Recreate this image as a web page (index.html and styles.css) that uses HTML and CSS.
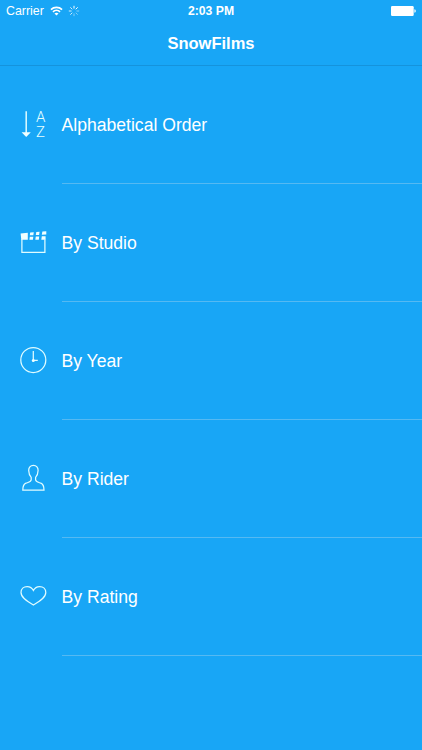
FILE: index.html
```html
<!DOCTYPE html>
<html lang="en">
<head>
<meta charset="utf-8">
<title>SnowFilms</title>
<link rel="stylesheet" href="styles.css">
</head>
<body>
<header class="header">
  <div class="status">
    <div class="status-left">
      <span class="carrier">Carrier</span>
      <svg class="wifi" width="13" height="10" viewBox="0 0 14 10"><g fill="none" stroke="#fff" stroke-width="1.8"><path d="M1 3.5A8.7 8.7 0 0 1 13 3.5"/><path d="M3.2 5.9A5.4 5.4 0 0 1 10.8 5.9"/></g><path d="M4.8 7.6Q7 6 9.2 7.6L7 9.8Z" fill="#fff"/></svg>
      <svg class="spinner" width="12" height="12" viewBox="-6 -6 12 12" stroke="#fff" stroke-width="1" stroke-linecap="round"><path d="M0-2.8V-4.8M2-2L3.4-3.4"/><path opacity=".45" d="M2.8 0H4.8M2 2L3.4 3.4M0 2.8V4.8"/><path opacity=".8" d="M-2 2L-3.4 3.4M-2.8 0H-4.8M-2-2L-3.4-3.4"/></svg>
    </div>
    <span class="time">2:03 PM</span>
    <svg class="battery" width="25" height="10" viewBox="0 0 25 10" fill="#fff"><rect width="22.7" height="10" rx="1.2"/><path d="M23.4 3.2Q24.8 3.4 24.8 5T23.4 6.8Z"/></svg>
  </div>
  <h1 class="title">SnowFilms</h1>
</header>
<main class="list">
  <div class="row">
    <svg class="icon" viewBox="0 0 30 39"><path class="line arrow" d="M8.2 6.2V28"/><path class="solid" d="M3.6 27.2H12.8L8.2 32Z"/><text class="letter" x="22.7" y="17.4">A</text><text class="letter" x="22.6" y="31.6">Z</text></svg>
    <span class="label">Alphabetical Order</span>
  </div>
  <div class="row">
    <svg class="icon" viewBox="0 0 30 39"><path class="line" d="M3.9 16V29.3H26.9V16.6"/><path class="solid" d="M2.6 10.5L9.8 9.7V16.8H3.3ZM12.2 9.5L15.8 9.2 15.3 12.2H11.8ZM18.3 9L21.6 8.8 21.1 11.9H17.8ZM24.4 8.5L28.3 8.2V11.4L23.8 11.7ZM11.8 13.8H15.3L14.9 16.8H11.4ZM17.8 13.5H21.2L20.8 16.8H17.3ZM23.8 13.2H27.6V16.8H23.3Z"/></svg>
    <span class="label">By Studio</span>
  </div>
  <div class="row">
    <svg class="icon" viewBox="0 0 30 39"><circle class="line" cx="15.3" cy="19" r="12.5"/><path class="line" d="M15.3 10V19.4H19.8"/><circle class="solid" cx="15.3" cy="19.4" r="1.5"/></svg>
    <span class="label">By Year</span>
  </div>
  <div class="row">
    <svg class="icon" viewBox="0 0 30 39"><path class="line" d="M15.4 6.4C12.3 6.4 10.6 8.6 10.7 11.6C10.8 14.6 11.6 16.8 13.2 18.4V20.8C13.2 22.8 10.4 23.3 8 24.2C5.4 25.2 4.8 27.5 4.8 31.2H26C26 27.5 25.4 25.2 22.8 24.2C20.4 23.3 17.6 22.8 17.6 20.8V18.4C19.2 16.8 20 14.6 20.1 11.6C20.2 8.6 18.5 6.4 15.4 6.4Z"/></svg>
    <span class="label">By Rider</span>
  </div>
  <div class="row">
    <svg class="icon" viewBox="0 0 30 39"><path class="line" d="M15.4 13.4C14.2 11 11.8 9.5 9.2 9.5C5.6 9.5 3 12 3 15.4C3 20.6 9.4 24.5 15.4 28C21.4 24.5 27.8 20.6 27.8 15.4C27.8 12 25.2 9.5 21.6 9.5C19 9.5 16.6 11 15.4 13.4Z"/></svg>
    <span class="label">By Rating</span>
  </div>
</main>
</body>
</html>
```
FILE: styles.css
```css
* { box-sizing: border-box; }
body {
  margin: 0;
  height: 750px;
  overflow: hidden;
  background: #18a6f6;
  color: #fff;
  font-family: "Liberation Sans", Arial, sans-serif;
}
.header {
  height: 66px;
  border-bottom: 1px solid #1593dc;
}
.status {
  display: grid;
  grid-template-columns: 1fr auto 1fr;
  align-items: center;
  height: 22px;
  padding: 0 6px;
  line-height: 22px;
}
.status-left { display: flex; align-items: center; }
.carrier { width: 39px; font-size: 12.4px; white-space: nowrap; }
.wifi { margin-left: 5px; margin-bottom: 1px; }
.spinner { margin-left: 5px; margin-bottom: 1px; }
.time { font-size: 12.2px; font-weight: bold; }
.battery { justify-self: end; }
.title {
  margin: 0;
  text-align: center;
  font-size: 16.5px;
  line-height: 43px;
  font-weight: bold;
}
.row {
  display: flex;
  height: 118px;
}
.icon {
  flex: none;
  align-self: center;
  width: 30px;
  height: 39px;
  margin: 0 13.5px 1px 18px;
}
.label {
  flex: 1;
  padding-top: 1px;
  border-bottom: 1px solid #55b9f2;
  font-size: 17.6px;
  line-height: 116px;
}
.line { fill: none; stroke: #e0fcff; stroke-width: 1.25; }
.arrow { stroke-width: 1.5; }
.solid { fill: #f0ffff; }
.letter {
  fill: #e6ffff;
  font-family: Roboto, sans-serif;
  font-size: 15px;
  font-weight: 300;
  text-anchor: middle;
}
```
